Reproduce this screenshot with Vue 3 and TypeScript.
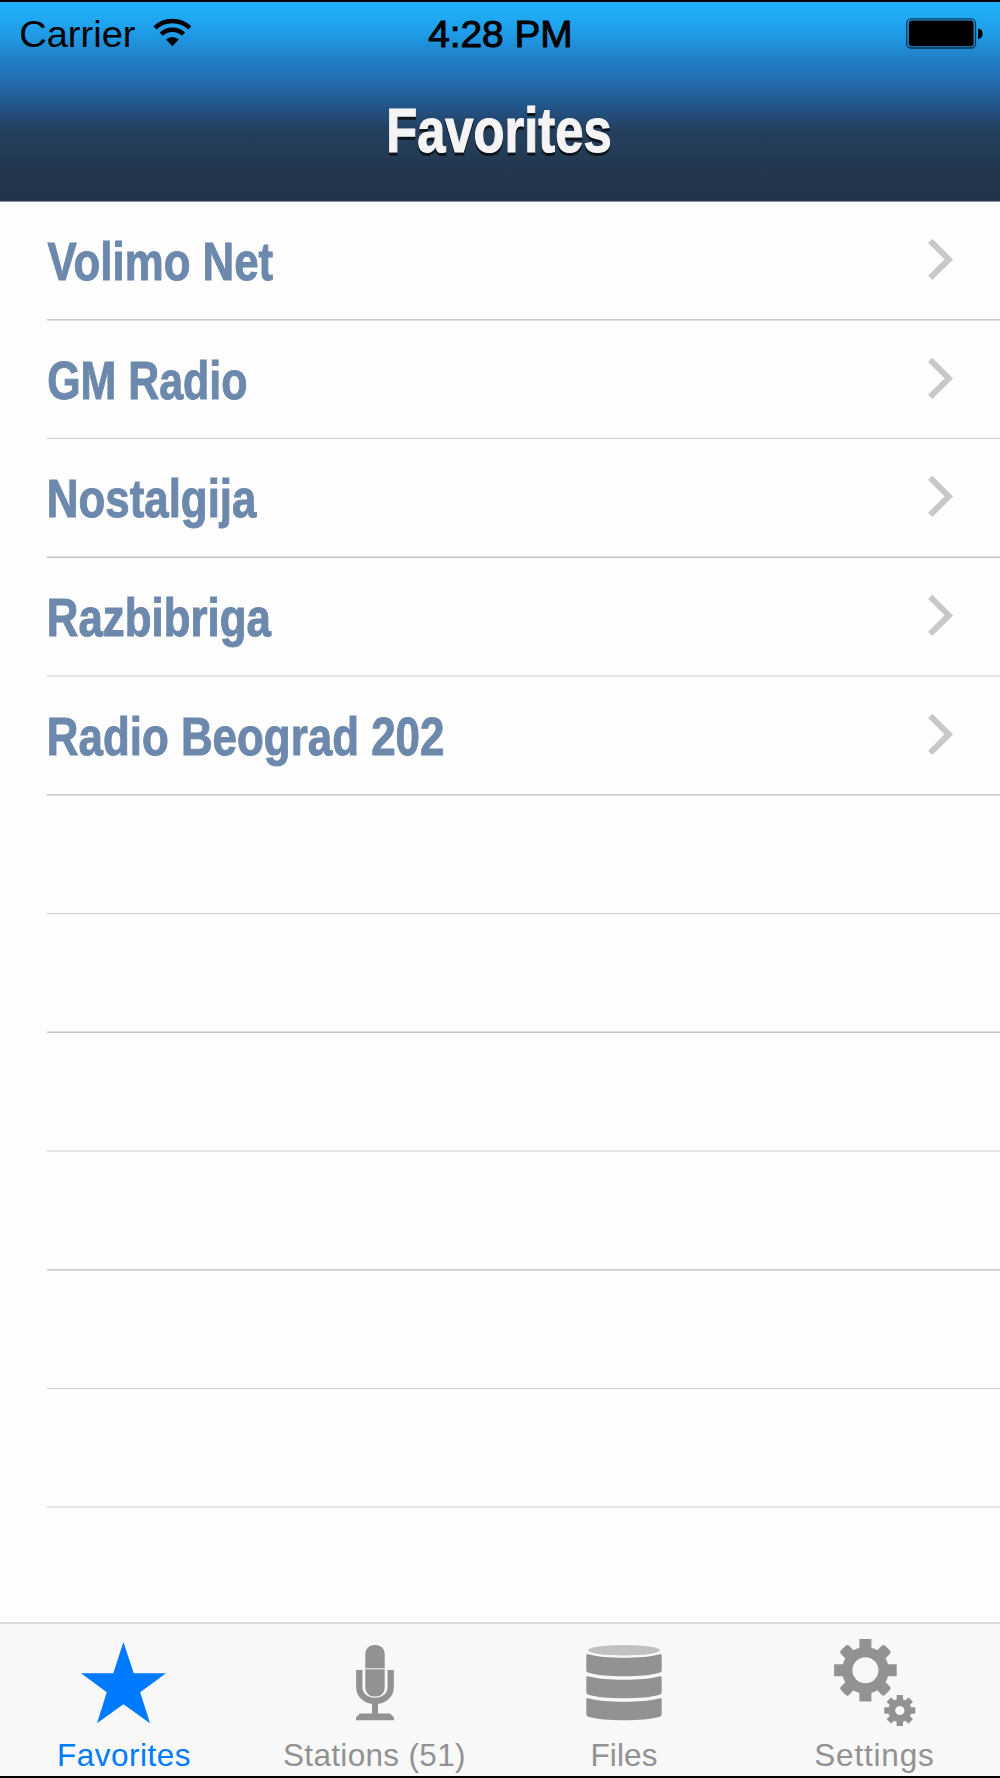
<script setup lang="ts">
interface Station {
  name: string
  x: number
  width: number
}

interface Tab {
  id: string
  label: string
  x: number
  width: number
}

const stations: Station[] = [
  { name: 'Volimo Net', x: 47.6, width: 225.6 },
  { name: 'GM Radio', x: 47.2, width: 200.3 },
  { name: 'Nostalgija', x: 46.8, width: 209.6 },
  { name: 'Razbibriga', x: 46.8, width: 224 },
  { name: 'Radio Beograd 202', x: 46.8, width: 397.6 },
]

const rows: (Station | null)[] = [...stations, ...Array<null>(6).fill(null)]

const tabs: Tab[] = [
  { id: 'favorites', label: 'Favorites', x: 57, width: 133.5 },
  { id: 'stations', label: 'Stations (51)', x: 33, width: 182.5 },
  { id: 'files', label: 'Files', x: 90.4, width: 67 },
  { id: 'settings', label: 'Settings', x: 64.3, width: 119.4 },
]

const teeth = [0, 45, 90, 135, 180, 225, 270, 315]
</script>

<template>
  <div class="screen">
    <header class="header">
      <div class="status">
        <svg class="carrier" width="333" height="58" viewBox="0 0 333 58">
          <text x="19.2" y="45.3" textLength="116.3" lengthAdjust="spacingAndGlyphs">Carrier</text>
          <g transform="translate(172.4 44.2)">
            <path d="M-17.4 -18.4A25.6 25.6 0 0 1 17.4 -18.4M-11.2 -12A16.4 16.4 0 0 1 11.2 -12" fill="none" stroke="#000" stroke-width="4.4" />
            <path d="M0 0L-6.4 -6.7A9.4 9.4 0 0 1 6.4 -6.7Z" />
          </g>
        </svg>
        <svg width="334" height="58" viewBox="333 0 334 58">
          <text class="clock" x="428.2" y="45.3" textLength="144.5" lengthAdjust="spacingAndGlyphs">4:28 PM</text>
        </svg>
        <svg width="333" height="58" viewBox="667 0 333 58">
          <rect x="906.7" y="16.8" width="68.8" height="29.2" rx="4.5" fill="none" stroke="#000" stroke-opacity=".65" stroke-width="1.3" />
          <rect x="908.8" y="18.6" width="64.8" height="25.6" rx="3" />
          <path d="M978 26.5C981 26.7 982.6 28.8 982.6 31.7S981 36.7 978 36.9Z" />
        </svg>
      </div>
      <svg class="title" width="1000" height="141" viewBox="0 0 1000 141">
        <text x="386.2" y="91.8" textLength="225.4" lengthAdjust="spacingAndGlyphs">Favorites</text>
      </svg>
    </header>

    <main class="list">
      <div v-for="(row, i) in rows" :key="i" class="row" :class="'phase-' + (i % 4)">
        <template v-if="row">
          <svg class="name" width="600" height="100" viewBox="0 0 600 100">
            <text :x="row.x" y="60.7" :textLength="row.width" lengthAdjust="spacingAndGlyphs">{{ row.name }}</text>
          </svg>
          <svg class="chevron" width="80" height="100" viewBox="0 0 80 100">
            <path d="M10.2 21.9L28.8 40.4L10.2 58.9" />
          </svg>
        </template>
      </div>
    </main>

    <nav class="tabs">
      <div v-for="tab in tabs" :key="tab.id" class="tab" :class="{ active: tab.id === 'favorites' }">
        <svg width="250" height="104" viewBox="0 0 250 104">
          <path v-if="tab.id === 'favorites'" d="M123.4 18L133.8 49.3H166L140.2 68.3L150 99.3L123.4 80.3L97 99.3L106.8 68.3L81 49.3H113.3Z" />
          <template v-else-if="tab.id === 'stations'">
            <rect x="115.3" y="21" width="19.4" height="51.5" rx="8.6" />
            <path d="M115 44.7H135" stroke="#d8d8d8" stroke-width="1.5" />
            <path d="M109.3 46V63C109.3 71.5 116.3 77 125 77S140.7 71.5 140.7 63V46" fill="none" stroke="currentColor" stroke-width="6.3" />
            <path d="M122 77H128V89.5H140L144 93.5V96.2H106V93.5L110 89.5H122Z" />
          </template>
          <template v-else-if="tab.id === 'files'">
            <ellipse cx="124" cy="26.2" rx="36" ry="5.2" fill="#c1c1c1" />
            <path
              v-for="n in 3"
              :key="n"
              :transform="`translate(0 ${(n - 1) * 22})`"
              d="M86.3 31.5Q86.3 30 88.3 30.3C104 35 144 35 159.7 30.3Q161.7 30 161.7 31.5V46Q161.7 48 159.7 48.8C144 53.5 104 53.5 88.3 48.8Q86.3 48 86.3 46Z"
            />
          </template>
          <template v-else>
            <g transform="translate(115.4 46.3)">
              <circle r="18.2" fill="none" stroke="currentColor" stroke-width="10.4" />
              <rect v-for="a in teeth" :key="a" :transform="`rotate(${a})`" :x="a % 90 ? -5.8 : -6" y="-31.3" :width="a % 90 ? 11.6 : 12" height="13" :rx="a % 90 ? 2.5 : 0.5" />
            </g>
            <g transform="translate(149.8 86.5)">
              <circle r="8.1" fill="none" stroke="currentColor" stroke-width="7" />
              <rect v-for="a in teeth" :key="a" :transform="`rotate(${a})`" x="-3.2" y="-15.5" width="6.4" height="7" rx=".6" />
            </g>
          </template>
        </svg>
        <svg width="250" height="48" viewBox="0 0 250 48">
          <text :x="tab.x" y="37.8" :textLength="tab.width">{{ tab.label }}</text>
        </svg>
      </div>
    </nav>
  </div>
</template>

<style>
body {
  background: #fff;
}
</style>

<style scoped>
.screen {
  box-sizing: border-box;
  display: flex;
  flex-direction: column;
  width: 1000px;
  height: 1778px;
  border-top: 2px solid #000;
  border-bottom: 2px solid #000;
  background: #fefefe;
  font-family: "Liberation Sans", Arial, sans-serif;
}

svg {
  display: block;
  flex: none;
}

.header {
  box-sizing: border-box;
  height: 200px;
  border-bottom: 1px solid #8d8f9b;
  background: linear-gradient(#1eb3fc 0, #1fabf4 13px, #209de8 30px, #208fd8 43px, #207dc5 60px, #226eaf 78px, #225b94 97px, #234c79 113px, #243f5f 128px, #233d58 145px, #23374f 165px, #243349 199px);
}

.status {
  display: flex;
}

.status text {
  font-size: 37.6px;
}

.status .clock {
  stroke: #000;
  stroke-width: 1px;
}

.title text {
  font-size: 63.5px;
  font-weight: bold;
  fill: #f4f4f4;
  stroke: #f4f4f4;
  stroke-width: 1.2px;
  filter: drop-shadow(0 3px 0 #0d141c);
}

.list {
  flex: none;
  height: 1420px;
}

.row {
  box-sizing: border-box;
  display: flex;
  align-items: flex-end;
  justify-content: space-between;
  height: 119px;
  background: linear-gradient(var(--upper) 50%, var(--lower) 50%) 47px 100% / 953px 2px no-repeat;
}

.phase-0 {
  --upper: #c8c7cc;
  --lower: #dfdfe1;
}

.phase-1 {
  --upper: #cdcdd0;
  --lower: #fefefe;
}

.phase-2 {
  --upper: #dfdfe1;
  --lower: #c5c4c9;
  height: 118px;
}

.phase-3,
.row:last-child {
  --upper: #e5e5e6;
  --lower: #e5e5e6;
}

.name,
.chevron {
  margin-bottom: 2px;
}

.name text {
  font-size: 54.5px;
  font-weight: bold;
  fill: #6c88ac;
  stroke: #6c88ac;
  stroke-width: 1px;
}

.chevron path {
  fill: none;
  stroke: #c7c7cc;
  stroke-width: 6px;
}

.tabs {
  display: flex;
  border-top: 2px solid #dadada;
  background: #f8f8f8;
}

.tab {
  width: 250px;
  color: #929292;
  fill: currentColor;
}

.tab.active {
  color: #007aff;
}

.tab text {
  font-size: 31.5px;
}
</style>
